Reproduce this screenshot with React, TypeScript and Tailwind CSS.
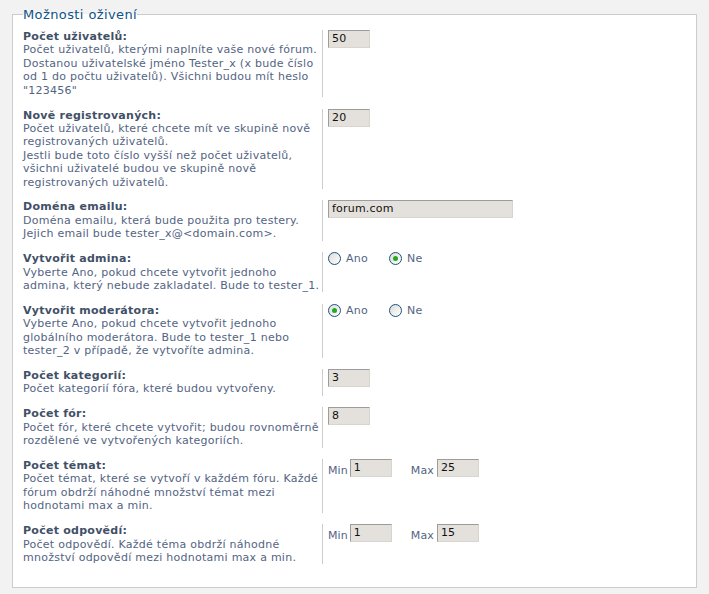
import React from 'react';

const font = { fontFamily: '"DejaVu Sans", Verdana, sans-serif' };

function TextInput({ value, wide }: { value: string; wide?: boolean }) {
  return (
    <div
      className={`${wide ? 'w-[185px]' : 'w-[42px]'} h-[18px] bg-[#e4e1dc] border border-t-[#9c9c9c] border-l-[#9c9c9c] border-b-[#d8d5cf] border-r-[#d8d5cf] pl-[3px] text-[11px] leading-[16px] tracking-[0.2px] text-[#111]`}
    >
      {value}
    </div>
  );
}

function Radio({ checked, label }: { checked?: boolean; label: string }) {
  return (
    <div className="flex items-center">
      <span className="w-[13px] h-[13px] rounded-full border border-[#1c5180] bg-gradient-to-br from-[#dcdcd7] to-white flex items-center justify-center">
        {checked && <span className="w-[5px] h-[5px] rounded-full bg-[#25a825]" />}
      </span>
      <span className="ml-[5px] text-[#536482] tracking-[0.25px]">{label}</span>
    </div>
  );
}

function Row({ label, lines, children }: { label: string; lines: string[]; children: React.ReactNode }) {
  return (
    <div className="flex">
      <div className="w-[300px] shrink-0 border-r border-[#cccccc] leading-[13.4px] tracking-[0.26px] whitespace-nowrap">
        <div className="font-bold text-[#425067]">{label}</div>
        {lines.map((l, i) => (
          <div key={i} className="text-[#536482]">{l}</div>
        ))}
      </div>
      <div className="ml-[5px]">{children}</div>
    </div>
  );
}

function MinMax({ min, max }: { min: string; max: string }) {
  return (
    <div className="flex items-end text-[#536482] tracking-[0.1px]">
      <span className="mr-[2px] leading-[12px]">Min</span>
      <TextInput value={min} />
      <span className="ml-[19px] mr-[3px] leading-[12px]">Max</span>
      <TextInput value={max} />
    </div>
  );
}

export default function App() {
  return (
    <div className="min-h-screen bg-[#f2f2f2] pt-[7px] pb-[8px] text-[11px]" style={font}>
      <fieldset className="mx-[12px] border border-[#cccccc] bg-white pl-[10px] pr-[10px] pt-[8px] pb-[23px]">
        <legend className="text-[13px] leading-[15px] tracking-[0.4px] text-[#105289] px-0">Možnosti oživení</legend>
        <div className="flex flex-col gap-[11.5px]">
          <Row
            label="Počet uživatelů:"
            lines={[
              'Počet uživatelů, kterými naplníte vaše nové fórum.',
              'Dostanou uživatelské jméno Tester_x (x bude číslo',
              'od 1 do počtu uživatelů). Všichni budou mít heslo',
              '"123456"',
            ]}
          >
            <TextInput value="50" />
          </Row>
          <Row
            label="Nově registrovaných:"
            lines={[
              'Počet uživatelů, které chcete mít ve skupině nově',
              'registrovaných uživatelů.',
              'Jestli bude toto číslo vyšší než počet uživatelů,',
              'všichni uživatelé budou ve skupině nově',
              'registrovaných uživatelů.',
            ]}
          >
            <TextInput value="20" />
          </Row>
          <Row
            label="Doména emailu:"
            lines={['Doména emailu, která bude použita pro testery.', 'Jejich email bude tester_x@<domain.com>.']}
          >
            <TextInput value="forum.com" wide />
          </Row>
          <Row
            label="Vytvořit admina:"
            lines={['Vyberte Ano, pokud chcete vytvořit jednoho', 'admina, který nebude zakladatel. Bude to tester_1.']}
          >
            <div className="flex gap-[21px] leading-[13px]">
              <Radio label="Ano" />
              <Radio label="Ne" checked />
            </div>
          </Row>
          <Row
            label="Vytvořit moderátora:"
            lines={[
              'Vyberte Ano, pokud chcete vytvořit jednoho',
              'globálního moderátora. Bude to tester_1 nebo',
              'tester_2 v případě, že vytvoříte admina.',
            ]}
          >
            <div className="flex gap-[21px] leading-[13px]">
              <Radio label="Ano" checked />
              <Radio label="Ne" />
            </div>
          </Row>
          <Row label="Počet kategorií:" lines={['Počet kategorií fóra, které budou vytvořeny.']}>
            <TextInput value="3" />
          </Row>
          <Row
            label="Počet fór:"
            lines={['Počet fór, které chcete vytvořit; budou rovnoměrně', 'rozdělené ve vytvořených kategoriích.']}
          >
            <TextInput value="8" />
          </Row>
          <Row
            label="Počet témat:"
            lines={[
              'Počet témat, které se vytvoří v každém fóru. Každé',
              'fórum obdrží náhodné množství témat mezi',
              'hodnotami max a min.',
            ]}
          >
            <MinMax min="1" max="25" />
          </Row>
          <Row
            label="Počet odpovědí:"
            lines={['Počet odpovědí. Každé téma obdrží náhodné', 'množství odpovědí mezi hodnotami max a min.']}
          >
            <MinMax min="1" max="15" />
          </Row>
        </div>
      </fieldset>
    </div>
  );
}
